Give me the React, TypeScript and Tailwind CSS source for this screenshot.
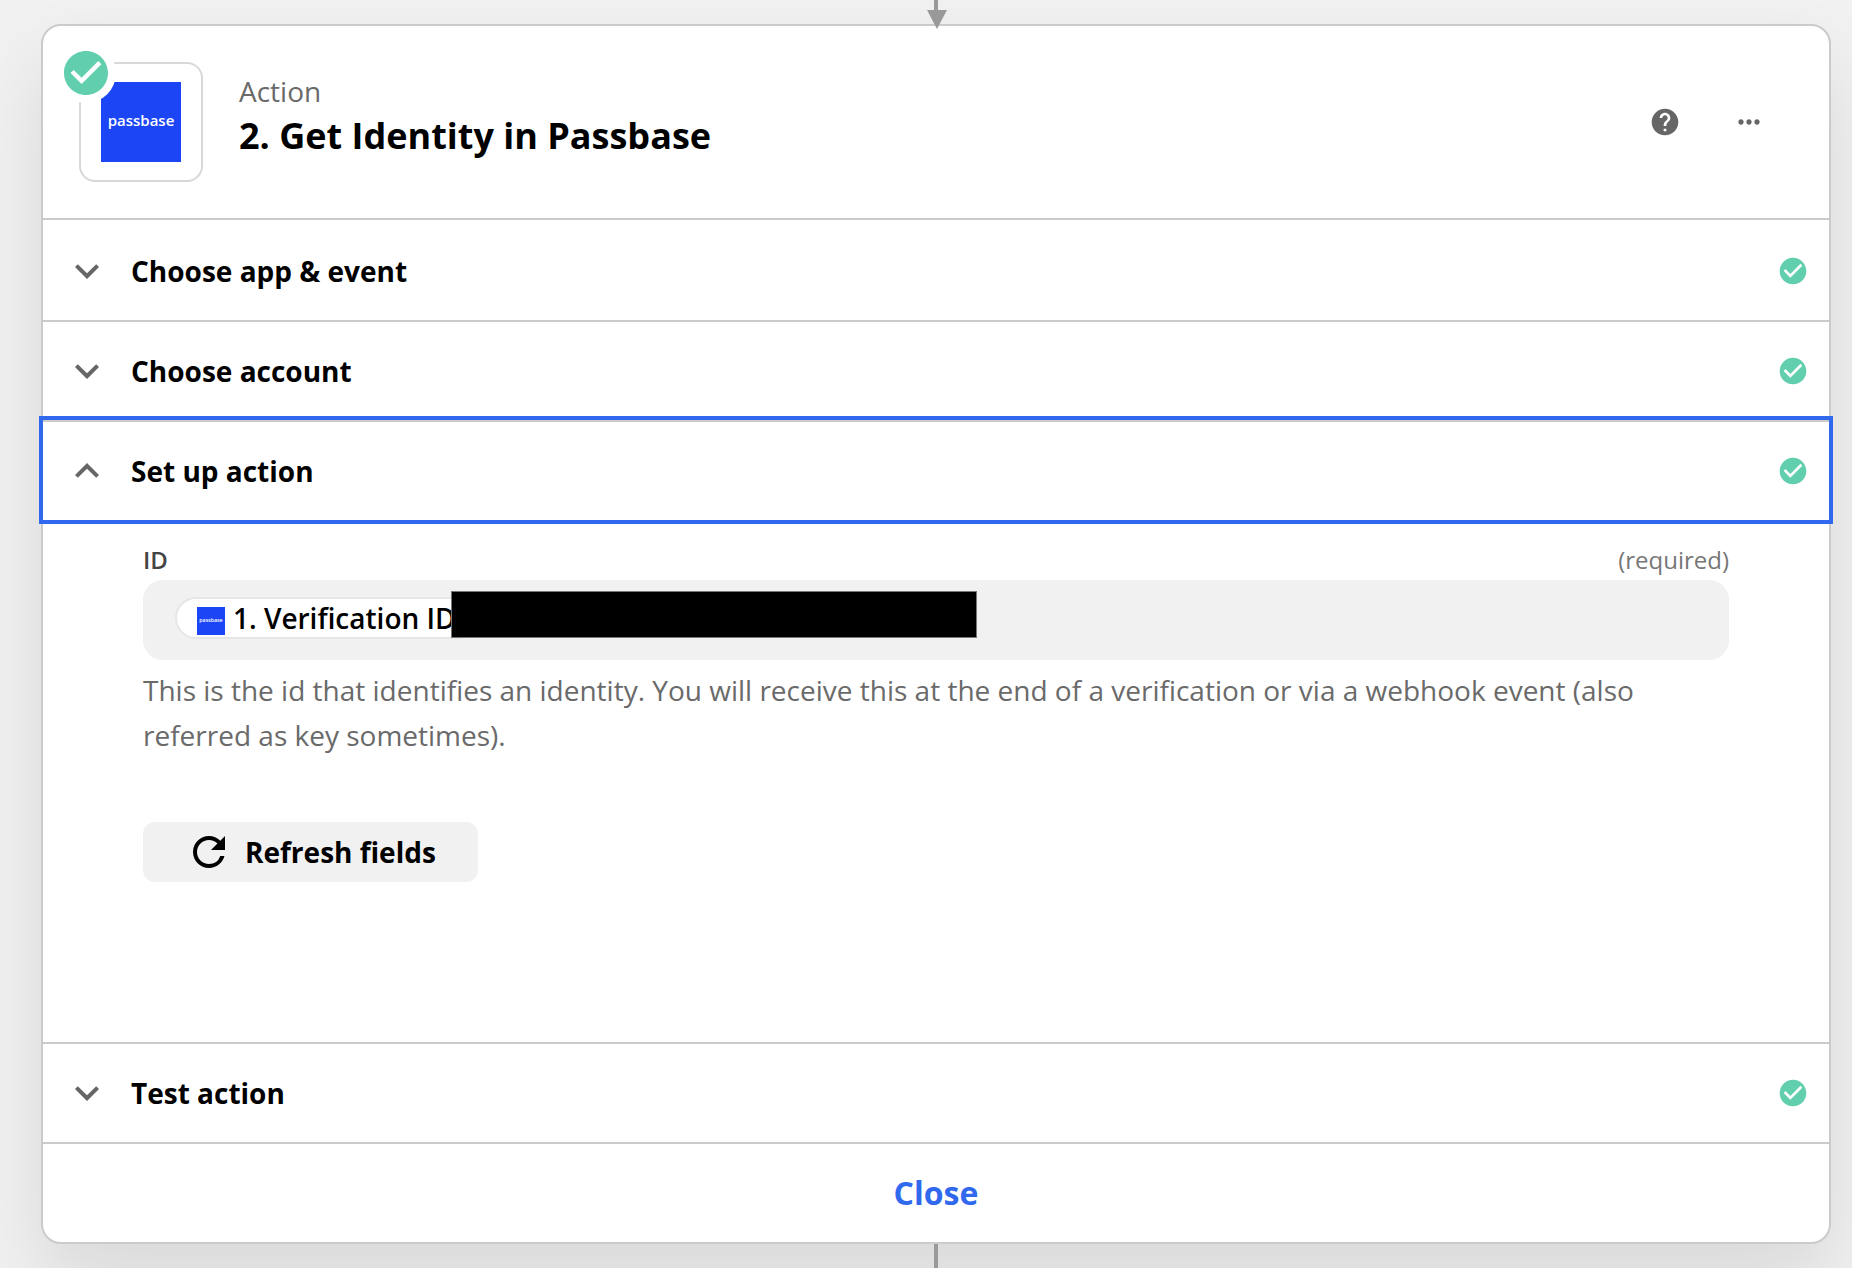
import clsx from "clsx";
import {
  MdCheckCircle,
  MdExpandLess,
  MdExpandMore,
  MdHelp,
  MdMoreHoriz,
  MdRefresh,
} from "react-icons/md";

function PassbaseLogo({ className }: { className?: string }) {
  return (
    <svg viewBox="0 0 80 80" className={className} role="img" aria-label="passbase">
      <rect width="80" height="80" fill="#1c46f5" />
      <text
        x="40"
        y="44"
        textAnchor="middle"
        fill="#fff"
        fontSize="15"
        fontWeight="600"
        fontFamily="Open Sans, sans-serif"
      >
        passbase
      </text>
    </svg>
  );
}

function StepIcon() {
  return (
    <div className="relative flex h-[120px] w-[124px] shrink-0 items-center justify-center rounded-2xl border-2 border-[#d8d8d8]">
      <PassbaseLogo className="size-20" />
      <div className="absolute -top-[21px] -left-[25px] rounded-full bg-white p-2">
        <svg viewBox="2 2 20 20" className="size-11 fill-[#61cfae]" aria-hidden>
          <path d="M12 2C6.48 2 2 6.48 2 12s4.48 10 10 10 10-4.48 10-10S17.52 2 12 2zm-2 15l-5-5 1.41-1.41L10 14.17l7.59-7.59L19 8l-9 9z" />
        </svg>
      </div>
    </div>
  );
}

function SectionRow({
  title,
  open,
  focused,
  first,
}: {
  title: string;
  open?: boolean;
  focused?: boolean;
  first?: boolean;
}) {
  const Chevron = open ? MdExpandLess : MdExpandMore;

  return (
    <button
      type="button"
      aria-expanded={!!open}
      className={clsx(
        "flex h-[100px] w-full items-center gap-5 border-t-2 px-5 text-left",
        first ? "border-transparent" : "border-[#cbcbcb]",
        focused && "relative outline-4 outline-[#3069ee]",
      )}
    >
      <Chevron size={48} className="shrink-0 text-[#666]" />
      <span className="flex-1 text-[28px] leading-10 font-bold">{title}</span>
      <MdCheckCircle size={32} className="shrink-0 text-[#61cfae]" />
    </button>
  );
}

function IdField() {
  return (
    <div>
      <div className="flex justify-between text-2xl leading-10">
        <span id="id-label" className="font-semibold text-[#444]">
          ID
        </span>
        <span className="text-[#777]">(required)</span>
      </div>
      <div
        role="textbox"
        tabIndex={0}
        aria-labelledby="id-label"
        className="relative flex h-20 items-center rounded-[20px] bg-[#f1f1f1] px-8 pb-1"
      >
        <div className="flex h-[42px] items-center gap-2 rounded-full border-2 border-[#e6e6e6] bg-white px-5">
          <PassbaseLogo className="mt-1.5 size-7" />
          <span className="text-[28px] leading-none font-semibold">1. Verification ID</span>
        </div>
        <div className="absolute top-[11px] left-[308px] h-[47px] w-[526px] border border-[#777] bg-black" />
      </div>
      <p className="mt-2 text-[28px] leading-[45px] text-[#6a6a6a]">
        This is the id that identifies an identity. You will receive this at the end of a
        verification or via a webhook event (also referred as key sometimes).
      </p>
    </div>
  );
}

export default function App() {
  return (
    <main className="flex min-h-screen flex-col overflow-hidden bg-[#f1f1f1] pr-[21px] pl-[41px] font-['Open_Sans',sans-serif] text-black">
      <div className="relative z-10 flex h-6 justify-center">
        <svg viewBox="0 0 22 29" className="h-[29px] w-[22px] shrink-0 fill-[#999]" aria-hidden>
          <path d="M9 0h4v10h9L12 29 2 10h7z" />
        </svg>
      </div>

      <section className="rounded-[20px] border-2 border-[#cbcbcb] bg-white shadow-[0_40px_80px_rgba(0,0,0,0.1)]">
        <header className="flex items-center gap-9 border-b-2 border-[#cbcbcb] p-9">
          <StepIcon />
          <div className="flex-1 pb-3">
            <p className="text-[28px] leading-10 text-[#6a6a6a]">Action</p>
            <h1 className="text-4xl leading-[50px] font-bold">2. Get Identity in Passbase</h1>
          </div>
          <div className="flex gap-[52px] pr-7 text-[#666]">
            <button type="button" aria-label="Help">
              <MdHelp size={32} />
            </button>
            <button type="button" aria-label="More options">
              <MdMoreHoriz size={32} />
            </button>
          </div>
        </header>

        <SectionRow title="Choose app & event" first />
        <SectionRow title="Choose account" />
        <SectionRow title="Set up action" open focused />

        <div className="px-[100px] pt-5 pb-40">
          <IdField />
          <button
            type="button"
            className="mt-16 flex h-[60px] items-center gap-3 rounded-xl bg-[#f1f1f1] px-[42px] text-[28px] font-bold"
          >
            <MdRefresh size={48} />
            Refresh fields
          </button>
        </div>

        <SectionRow title="Test action" />
        <button
          type="button"
          className="h-[100px] w-full border-t-2 border-[#cbcbcb] text-[32px] font-bold text-[#3069ee]"
        >
          Close
        </button>
      </section>

      <div className="mx-auto min-h-6 w-1 flex-1 bg-[#999]" />
    </main>
  );
}
